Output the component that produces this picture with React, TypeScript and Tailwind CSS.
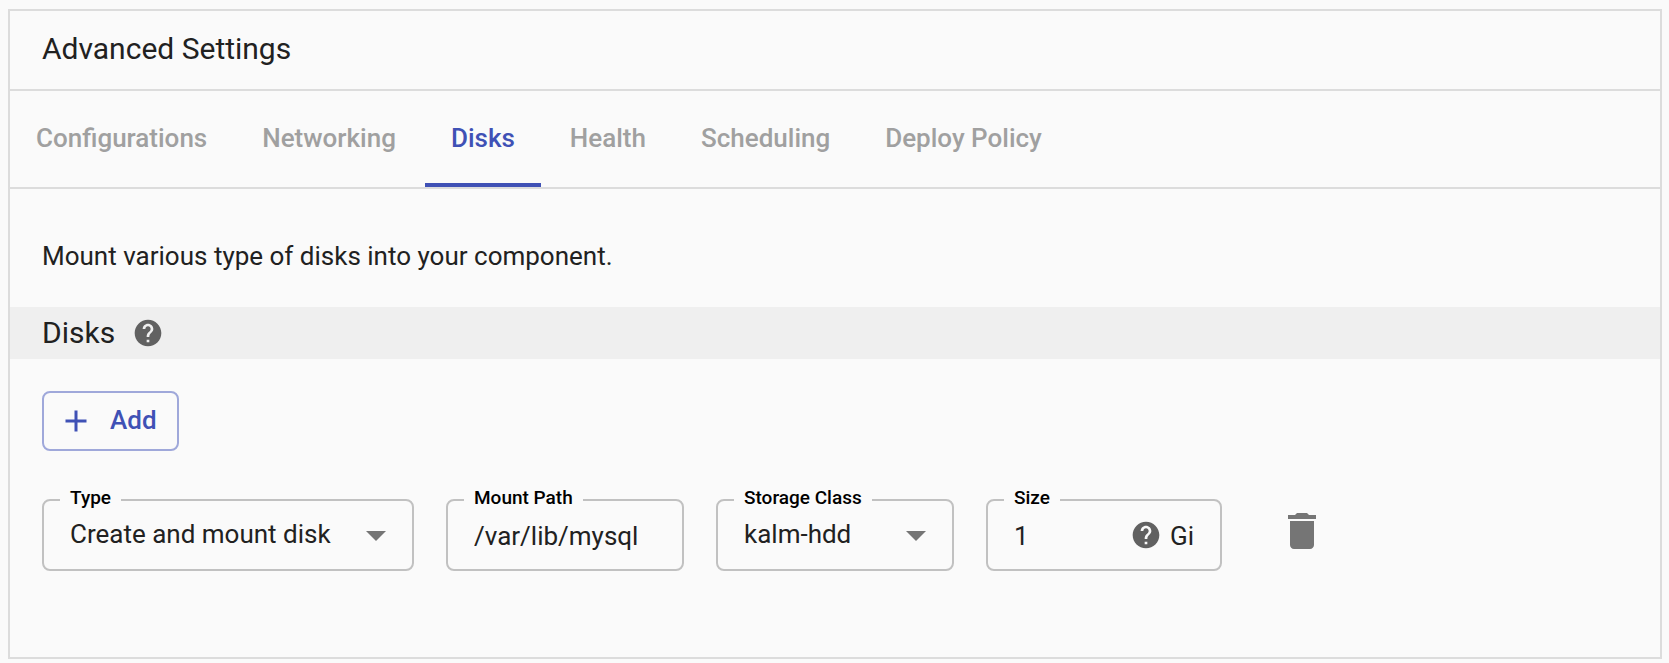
import { useState, type ReactNode } from "react";

const tabs = ["Configurations", "Networking", "Disks", "Health", "Scheduling", "Deploy Policy"];

function HelpIcon() {
  return (
    <svg viewBox="0 0 24 24" className="size-8 shrink-0 fill-[#616161]" aria-hidden="true">
      <path d="M12 2C6.48 2 2 6.48 2 12s4.48 10 10 10 10-4.48 10-10S17.52 2 12 2zm1 17h-2v-2h2v2zm2.07-7.75l-.9.92C13.45 12.9 13 13.5 13 15h-2v-.5c0-1.1.45-2.1 1.17-2.83l1.24-1.26c.37-.36.59-.86.59-1.41 0-1.1-.9-2-2-2s-2 .9-2 2H8c0-2.21 1.79-4 4-4s4 1.79 4 4c0 .88-.36 1.68-.93 2.25z" />
    </svg>
  );
}

function ArrowIcon() {
  return (
    <svg
      viewBox="0 0 24 24"
      className="pointer-events-none absolute top-2.5 right-3 size-12 fill-[#757575]"
      aria-hidden="true"
    >
      <path d="M7 10l5 5 5-5z" />
    </svg>
  );
}

function Field({ id, label, className, children }: { id: string; label: string; className: string; children: ReactNode }) {
  return (
    <div className={`relative flex h-[72px] items-center rounded-lg border-2 border-[#c1c1c1] ${className}`}>
      <label
        htmlFor={id}
        className="absolute -top-[15px] left-4 bg-[#fafafa] px-2.5 text-[19px] leading-6 font-medium whitespace-nowrap text-black"
      >
        {label}
      </label>
      {children}
    </div>
  );
}

export default function App() {
  const [active, setActive] = useState("Disks");
  const [type, setType] = useState("Create and mount disk");
  const [path, setPath] = useState("/var/lib/mysql");
  const [storage, setStorage] = useState("kalm-hdd");
  const [size, setSize] = useState("1");

  return (
    <div className="min-h-screen bg-[#fafafa] pt-[9px] pr-[7px] pb-1 pl-2 font-['Roboto',sans-serif] text-[26px] leading-8 text-[#212121]">
      <section className="border-2 border-[#dcdcdc] pb-[86px]">
        <h1 className="border-b-2 border-[#dcdcdc] px-8 pt-[18px] pb-5 text-[30px] leading-10">Advanced Settings</h1>

        <div role="tablist" className="flex h-[98px] gap-[3px] border-b-2 border-[#dcdcdc]">
          {tabs.map((tab) => (
            <button
              key={tab}
              type="button"
              role="tab"
              aria-selected={tab === active}
              onClick={() => setActive(tab)}
              className={`border-b-4 px-[26px] pt-0.5 font-medium whitespace-nowrap ${
                tab === active ? "border-[#3f51b5] text-[#3f51b5]" : "border-transparent text-[#a0a0a0]"
              }`}
            >
              {tab}
            </button>
          ))}
        </div>

        <p className="px-8 pt-[51px] pb-[35px]">Mount various type of disks into your component.</p>

        <div className="flex h-[52px] items-center gap-[17px] bg-[#efefef] px-8">
          <h2 className="text-[30px] leading-10">Disks</h2>
          <HelpIcon />
        </div>

        <div className="px-8 pt-8">
          <button
            type="button"
            className="flex h-[60px] items-center gap-4 rounded-lg border-2 border-[#9fa8da] pr-5 pl-3.5 font-medium text-[#3f51b5]"
          >
            <svg viewBox="0 0 24 24" className="size-9 fill-current" aria-hidden="true">
              <path d="M19 13h-6v6h-2v-6H5v-2h6V5h2v6h6v2z" />
            </svg>
            <span className="pb-0.5">Add</span>
          </button>

          <div className="mt-12 flex items-center gap-8">
            <Field id="type" label="Type" className="w-[372px]">
              <select
                id="type"
                value={type}
                onChange={(e) => setType(e.target.value)}
                className="h-full w-full appearance-none bg-transparent pr-14 pb-0.5 pl-[26px] outline-none"
              >
                <option>Create and mount disk</option>
              </select>
              <ArrowIcon />
            </Field>
            <Field id="path" label="Mount Path" className="w-[238px]">
              <input
                id="path"
                value={path}
                onChange={(e) => setPath(e.target.value)}
                className="h-full w-full bg-transparent px-[26px] pt-0.5 outline-none"
              />
            </Field>
            <Field id="storage" label="Storage Class" className="w-[238px]">
              <select
                id="storage"
                value={storage}
                onChange={(e) => setStorage(e.target.value)}
                className="h-full w-full appearance-none bg-transparent pr-14 pb-0.5 pl-[26px] outline-none"
              >
                <option>kalm-hdd</option>
              </select>
              <ArrowIcon />
            </Field>
            <Field id="size" label="Size" className="w-[236px] pr-[26px]">
              <input
                id="size"
                value={size}
                onChange={(e) => setSize(e.target.value)}
                className="h-full w-full min-w-0 bg-transparent pt-0.5 pl-[26px] outline-none"
              />
              <HelpIcon />
              <span className="pt-0.5 pl-2">Gi</span>
            </Field>
            <button type="button" aria-label="Delete disk" className="ml-6 pb-2">
              <svg viewBox="0 0 24 24" className="size-12 fill-[#757575]" aria-hidden="true">
                <path d="M6 19c0 1.1.9 2 2 2h8c1.1 0 2-.9 2-2V7H6v12zM19 4h-3.5l-1-1h-5l-1 1H5v2h14V4z" />
              </svg>
            </button>
          </div>
        </div>
      </section>
    </div>
  );
}
